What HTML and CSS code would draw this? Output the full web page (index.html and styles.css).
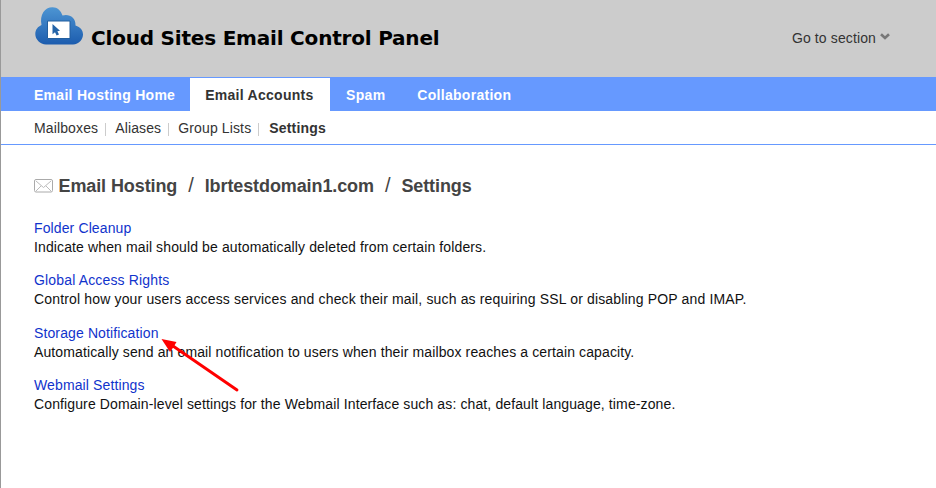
FILE: index.html
```html
<!DOCTYPE html>
<html lang="en">
<head>
<meta charset="utf-8">
<title>Cloud Sites Email Control Panel</title>
<link rel="stylesheet" href="styles.css">
</head>
<body>
<div class="page">
  <header class="header">
    <svg class="logo" width="48" height="38" viewBox="0 0 48 38">
      <defs><linearGradient id="cloud" x1="0" y1="0" x2="0" y2="1"><stop offset="0" stop-color="#4d95d3"/><stop offset="1" stop-color="#1c5cae"/></linearGradient></defs>
      <path d="M11 37.500C5 37 .3 32.500.3 27C.3 22.500 3 19.500 6.500 18C4.500 8 9.500.3 17.500.3C22.500.3 25.700 3.500 27.500 8.500C34 6.500 41 10.500 40.500 18.500C45.500 20 48 23.500 48 27.500C48 32.500 44 37 38 37.500Z" fill="url(#cloud)"/>
      <path d="M12.500 14H35V31.500H12.500Z" fill="#fff" stroke="#225f9f" stroke-width="1"/>
      <path d="M17.500 17L25 23.800L22.400 24.200L24 27.400L21.600 28.500L20 25.200L17.500 27.200Z" fill="#2464a8"/>
    </svg>
    <h1 class="title">Cloud Sites Email Control Panel</h1>
    <div class="jump"><span>Go to section</span><svg width="10" height="7" viewBox="0 0 10 7"><path d="M1 1.200L5 5L9 1.200" fill="none" stroke="#777" stroke-width="2.600"/></svg></div>
  </header>
  <nav class="tabs">
    <a class="tab">Email Hosting Home</a><a class="tab active">Email Accounts</a><a class="tab">Spam</a><a class="tab">Collaboration</a>
  </nav>
  <nav class="subnav">
    <a>Mailboxes</a><i></i><a>Aliases</a><i></i><a>Group Lists</a><i></i><a class="current">Settings</a>
  </nav>
  <main class="content">
    <h2 class="crumbs">
      <svg class="mail" width="19" height="14" viewBox="0 0 19 14"><rect x=".5" y=".5" width="18" height="12.500" rx="1.500" fill="#fff" stroke="#aaa"/><path d="M2 2L9.500 8.500L17 2M2 12L7 7M17 12L12 7" fill="none" stroke="#bbb"/></svg>
      <span>Email Hosting</span><b>/</b><span>lbrtestdomain1.com</span><b>/</b><span>Settings</span>
    </h2>
    <section class="item"><a>Folder Cleanup</a><p>Indicate when mail should be automatically deleted from certain folders.</p></section>
    <section class="item wide"><a>Global Access Rights</a><p>Control how your users access services and check their mail, such as requiring SSL or disabling POP and IMAP.</p></section>
    <section class="item"><a>Storage Notification</a><p>Automatically send an email notification to users when their mailbox reaches a certain capacity.</p></section>
    <section class="item"><a>Webmail Settings</a><p>Configure Domain-level settings for the Webmail Interface such as: chat, default language, time-zone.</p></section>
  </main>
  <svg class="arrow" width="80" height="56" viewBox="0 0 80 56"><path d="M12 8L76 52" stroke="#f00" stroke-width="2.900" stroke-linecap="round"/><path d="M.500 1L15.500 4L12.500 9L9 14Z" fill="#f00"/></svg>
</div>
</body>
</html>
```
FILE: styles.css
```css
* { box-sizing: border-box; }
body { margin: 0; background: #fff; font: 14px/19px "Liberation Sans", Arial, sans-serif; color: #111; }
.page { position: relative; height: 488px; border-left: 1px solid #999; overflow: hidden; white-space: nowrap; }
.header { height: 77px; background: #ccc; display: flex; align-items: flex-start; padding: 7px 46px 0 34px; }
.logo { flex: none; }
.title { margin: 18px 0 0 8px; font: bold 20px/26px "DejaVu Sans", Verdana, sans-serif; letter-spacing: -.2px; color: #000; }
.jump { margin: 22px 0 0 auto; color: #333; display: flex; gap: 4px; letter-spacing: .12px; }
.jump svg { margin-top: 4px; }
.tabs { height: 34px; background: #69f; display: flex; padding: 1px 0 0 18px; }
.tab { color: #fff; font-weight: bold; line-height: 34px; padding: 0 15px; letter-spacing: .28px; }
.active { background: #fff; color: #333; padding-right: 16.500px; }
.active ~ .tab { padding: 0 16px; letter-spacing: .28px; }
.subnav { height: 34px; border-bottom: 1px solid #69f; display: flex; align-items: center; padding: 1px 0 0 33px; color: #333; letter-spacing: .13px; }
.subnav i { width: 1px; height: 13px; background: #ccc; margin: 2px 9px 0 7px; }
.subnav i:last-of-type { margin-right: 10px; }
.current { font-weight: bold; letter-spacing: .18px; }
.content { padding: 30px 0 0 33px; }
.crumbs { display: flex; align-items: center; height: 22px; margin: 0 0 22px; font-size: 18px; letter-spacing: -.1px; color: #444; }
.mail { margin-right: 5.500px; }
.crumbs b { font-weight: normal; font-size: 20px; margin: -2px 11px 0; }
.item { height: 52.300px; letter-spacing: .12px; }
.wide { letter-spacing: .157px; }
.item a { display: block; color: #13c; }
.item p { margin: 0; }
.arrow { position: absolute; left: 160px; top: 338px; }
```
